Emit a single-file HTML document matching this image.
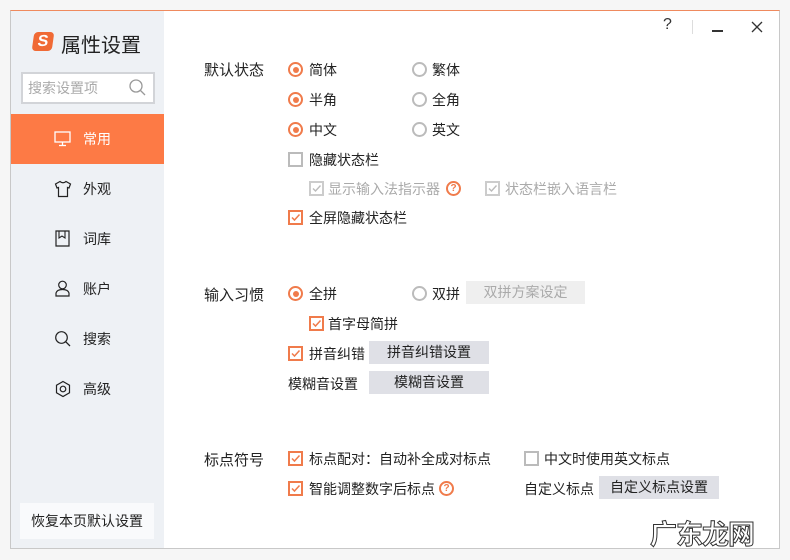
<!DOCTYPE html>
<html><head><meta charset="utf-8"><style>
*{margin:0;padding:0;box-sizing:border-box}
body{width:790px;height:560px;background:#f6f6f6;position:relative;overflow:hidden;font-family:"Liberation Sans","Noto Sans CJK SC",sans-serif;font-size:14px;color:#222}
.a{position:absolute;white-space:nowrap}
#win{position:absolute;left:10px;top:10px;width:770px;height:539px;background:#fff;border:1px solid #c8c8c8;border-top:1px solid #ef8a5e}
#side{position:absolute;left:11px;top:11px;width:153px;height:537px;background:#eef1f5}
.rad{position:absolute;width:15px;height:15px;border-radius:50%;border:2px solid #bbb;background:#fff}
.rad.on{border-color:#f07b4b}
.rad.on::after{content:"";position:absolute;left:2.5px;top:2.5px;width:6px;height:6px;border-radius:50%;background:#f07b4b}
.cb{position:absolute;width:15px;height:15px;border:2px solid #bbb;background:#fff}
.cb.on{border-color:#f07b4b}
.cb svg{position:absolute;left:0;top:0}
.btn{position:absolute;background:#dfe0e6;text-align:center;line-height:23px;height:23px}
.q{position:absolute;width:15px;height:15px;border-radius:50%;border:2px solid #f07b4b;color:#f07b4b;font-size:10px;font-weight:bold;text-align:center;line-height:11px}
.gray{color:#aaa}
.nav{position:absolute;left:83px;font-size:14px}
.lb{font-size:15px}
</style></head><body>
<div id="win"></div>
<div id="side"></div>
<div class="a" style="left:33px;top:32px;width:20px;height:19px;background:#f06a35;border-radius:4px;transform:skewX(-8deg);color:#fff;font-weight:bold;font-size:16px;text-align:center;line-height:19px">S</div>
<div class="a" style="left:61px;top:29px;font-size:20px;color:#222">属性设置</div>
<div class="a" style="left:21px;top:72px;width:134px;height:32px;border:2px solid #d2d4d8;background:#fff"></div>
<div class="a" style="left:28px;top:78px;color:#aaa;font-size:14px">搜索设置项</div>
<svg class="a" style="left:128px;top:78px" width="20" height="20"><circle cx="8" cy="8" r="6" fill="none" stroke="#999" stroke-width="1.3"/><line x1="12.5" y1="12.5" x2="17" y2="17" stroke="#999" stroke-width="1.3"/></svg>
<div class="a" style="left:11px;top:114px;width:153px;height:50px;background:#fd7a45"></div>
<svg class="a" style="left:54px;top:131px" width="18" height="16"><rect x="1" y="1" width="15" height="10" fill="none" stroke="#fff" stroke-width="1.3"/><line x1="8.5" y1="11" x2="8.5" y2="14" stroke="#fff" stroke-width="1.3"/><line x1="5" y1="14.5" x2="12" y2="14.5" stroke="#fff" stroke-width="1.3"/></svg>
<div class="nav" style="top:129px;color:#fff">常用</div>
<svg class="a" style="left:54px;top:180px" width="18" height="18"><path d="M6 1.5 L1.5 4 L3 8 L4.5 7.5 L4.5 16.5 L13.5 16.5 L13.5 7.5 L15 8 L16.5 4 L12 1.5 Q9 4 6 1.5Z" fill="none" stroke="#222" stroke-width="1.2"/></svg>
<div class="nav" style="top:179px">外观</div>
<svg class="a" style="left:55px;top:230px" width="16" height="18"><path d="M1 1 H14 V16 H1 Z" fill="none" stroke="#222" stroke-width="1.2"/><path d="M4 1 V8 L7 6 L10 8 V1" fill="none" stroke="#222" stroke-width="1.1"/></svg>
<div class="nav" style="top:229px">词库</div>
<svg class="a" style="left:54px;top:280px" width="17" height="18"><circle cx="8.5" cy="5" r="3.8" fill="none" stroke="#222" stroke-width="1.2"/><path d="M2 16 L2 13 Q3 9.5 8.5 9.5 Q14 9.5 15 13 L15 16 Z" fill="none" stroke="#222" stroke-width="1.2"/></svg>
<div class="nav" style="top:279px">账户</div>
<svg class="a" style="left:54px;top:330px" width="18" height="18"><circle cx="7.5" cy="7.5" r="5.8" fill="none" stroke="#222" stroke-width="1.2"/><line x1="11.8" y1="11.8" x2="16" y2="16" stroke="#222" stroke-width="1.3"/></svg>
<div class="nav" style="top:329px">搜索</div>
<svg class="a" style="left:54px;top:380px" width="18" height="18"><path d="M9 1.5 L15.5 5.2 V12.8 L9 16.5 L2.5 12.8 V5.2 Z" fill="none" stroke="#222" stroke-width="1.2"/><circle cx="9" cy="9" r="2.8" fill="none" stroke="#222" stroke-width="1.2"/></svg>
<div class="nav" style="top:379px">高级</div>
<div class="a" style="left:20px;top:503px;width:134px;height:36px;background:#f9fafc;text-align:center;line-height:36px;font-size:14px">恢复本页默认设置</div>
<div class="a" style="left:663px;top:16px;font-size:16px;color:#333">?</div>
<div class="a" style="left:692px;top:20px;width:1px;height:14px;background:#ddd"></div>
<div class="a" style="left:712px;top:30px;width:11px;height:1.5px;background:#333"></div>
<svg class="a" style="left:751px;top:21px" width="12" height="12"><path d="M1 1 L11 11 M11 1 L1 11" stroke="#333" stroke-width="1.3"/></svg>
<div class="a lb" style="left:204px;top:59px">默认状态</div>
<div class="rad on" style="left:288px;top:62px"></div><div class="a" style="left:309px;top:60px">简体</div>
<div class="rad" style="left:412px;top:62px"></div><div class="a" style="left:432px;top:60px">繁体</div>
<div class="rad on" style="left:288px;top:92px"></div><div class="a" style="left:309px;top:90px">半角</div>
<div class="rad" style="left:412px;top:92px"></div><div class="a" style="left:432px;top:90px">全角</div>
<div class="rad on" style="left:288px;top:122px"></div><div class="a" style="left:309px;top:120px">中文</div>
<div class="rad" style="left:412px;top:122px"></div><div class="a" style="left:432px;top:120px">英文</div>
<div class="cb" style="left:288px;top:152px"></div><div class="a" style="left:309px;top:150px">隐藏状态栏</div>
<div class="cb" style="left:309px;top:181px;border-color:#ccc"><svg width="11" height="11"><path d="M2 5.5 L4.5 8 L9.5 2.5" fill="none" stroke="#bbb" stroke-width="1.4"/></svg></div>
<div class="a gray" style="left:328px;top:179px">显示输入法指示器</div>
<div class="q" style="left:446px;top:181px">?</div>
<div class="cb" style="left:485px;top:181px;border-color:#ccc"><svg width="11" height="11"><path d="M2 5.5 L4.5 8 L9.5 2.5" fill="none" stroke="#bbb" stroke-width="1.4"/></svg></div>
<div class="a gray" style="left:505px;top:179px">状态栏嵌入语言栏</div>
<div class="cb on" style="left:288px;top:210px"><svg width="11" height="11"><path d="M2 5.5 L4.5 8 L9.5 2.5" fill="none" stroke="#f07b4b" stroke-width="1.5"/></svg></div>
<div class="a" style="left:309px;top:208px">全屏隐藏状态栏</div>
<div class="a lb" style="left:204px;top:284px">输入习惯</div>
<div class="rad on" style="left:288px;top:286px"></div><div class="a" style="left:309px;top:284px">全拼</div>
<div class="rad" style="left:412px;top:286px"></div><div class="a" style="left:432px;top:284px">双拼</div>
<div class="btn" style="left:466px;top:281px;width:119px;background:#efefef;color:#aaa">双拼方案设定</div>
<div class="cb on" style="left:309px;top:316px"><svg width="11" height="11"><path d="M2 5.5 L4.5 8 L9.5 2.5" fill="none" stroke="#f07b4b" stroke-width="1.5"/></svg></div>
<div class="a" style="left:328px;top:314px">首字母简拼</div>
<div class="cb on" style="left:288px;top:346px"><svg width="11" height="11"><path d="M2 5.5 L4.5 8 L9.5 2.5" fill="none" stroke="#f07b4b" stroke-width="1.5"/></svg></div>
<div class="a" style="left:309px;top:344px">拼音纠错</div>
<div class="btn" style="left:369px;top:341px;width:120px">拼音纠错设置</div>
<div class="a" style="left:288px;top:374px">模糊音设置</div>
<div class="btn" style="left:369px;top:371px;width:120px">模糊音设置</div>
<div class="a lb" style="left:204px;top:449px">标点符号</div>
<div class="cb on" style="left:288px;top:451px"><svg width="11" height="11"><path d="M2 5.5 L4.5 8 L9.5 2.5" fill="none" stroke="#f07b4b" stroke-width="1.5"/></svg></div>
<div class="a" style="left:309px;top:449px">标点配对：自动补全成对标点</div>
<div class="cb" style="left:524px;top:451px"></div>
<div class="a" style="left:544px;top:449px">中文时使用英文标点</div>
<div class="cb on" style="left:288px;top:481px"><svg width="11" height="11"><path d="M2 5.5 L4.5 8 L9.5 2.5" fill="none" stroke="#f07b4b" stroke-width="1.5"/></svg></div>
<div class="a" style="left:309px;top:479px">智能调整数字后标点</div>
<div class="q" style="left:439px;top:481px">?</div>
<div class="a" style="left:524px;top:479px">自定义标点</div>
<div class="btn" style="left:599px;top:476px;width:120px">自定义标点设置</div>
<div class="a" style="left:650px;top:513px;font-size:27px;font-weight:bold;color:#fff;-webkit-text-stroke:1px #333;letter-spacing:-1px">广东龙网</div>
</body></html>
